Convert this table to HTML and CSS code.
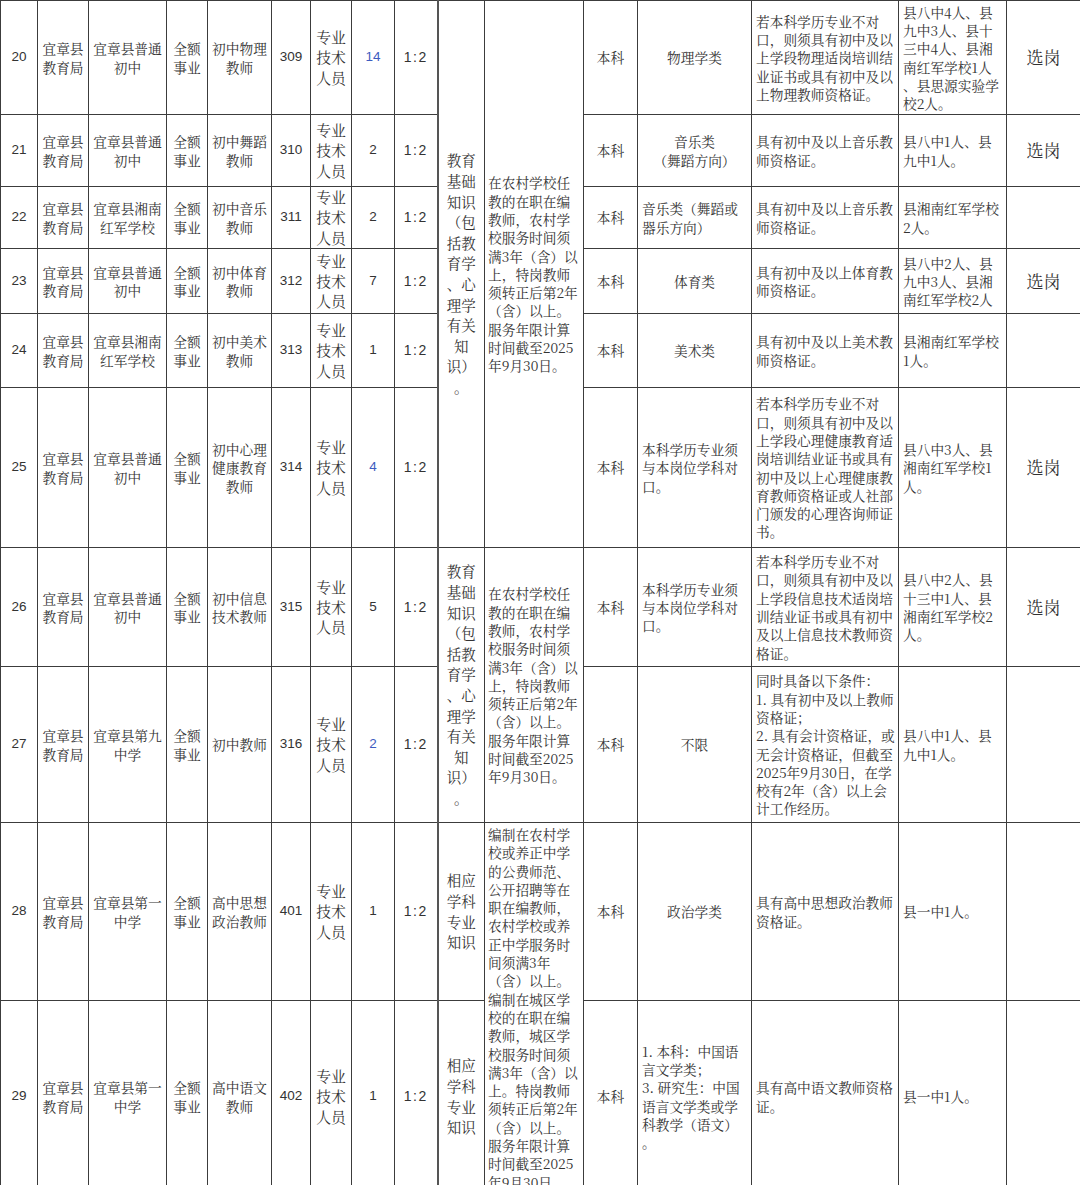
FILE: index.html
```html
<!DOCTYPE html>
<html lang="zh-CN">
<head>
<meta charset="utf-8">
<title>岗位表</title>
<link rel="stylesheet" href="styles.css">
</head>
<body>
<table class="grid">
<colgroup>
<col class="c0"><col class="c1"><col class="c2"><col class="c3"><col class="c4"><col class="c5"><col class="c6"><col class="c7"><col class="c8"><col class="c9"><col class="c10"><col class="c11"><col class="c12"><col class="c13"><col class="c14"><col class="c15">
</colgroup>
<tbody>
<tr class="r20">
<td class="num">20</td>
<td>宜章县<br>教育局</td>
<td>宜章县普通<br>初中</td>
<td>全额<br>事业</td>
<td>初中物理<br>教师</td>
<td class="num">309</td>
<td class="big">专业<br>技术<br>人员</td>
<td class="num blue">14</td>
<td class="num ratio">1:2</td>
<td class="exam" rowspan="6">教育<br>基础<br>知识<br>（包<br>括教<br>育学<br>、心<br>理学<br>有关<br>知<br>识）<br>。</td>
<td class="svc" rowspan="6">在农村学校任<br>教的在职在编<br>教师，农村学<br>校服务时间须<br>满3年（含）以<br>上，特岗教师<br>须转正后第2年<br>（含）以上。<br>服务年限计算<br>时间截至2025<br>年9月30日。</td>
<td>本科</td>
<td>物理学类</td>
<td class="l">若本科学历专业不对<br>口，则须具有初中及以<br>上学段物理适岗培训结<br>业证书或具有初中及以<br>上物理教师资格证。</td>
<td class="l">县八中4人、县<br>九中3人、县十<br>三中4人、县湘<br>南红军学校1人<br>、县思源实验学<br>校2人。</td>
<td class="pick">选岗</td>
</tr>
<tr class="r21">
<td class="num">21</td>
<td>宜章县<br>教育局</td>
<td>宜章县普通<br>初中</td>
<td>全额<br>事业</td>
<td>初中舞蹈<br>教师</td>
<td class="num">310</td>
<td class="big">专业<br>技术<br>人员</td>
<td class="num">2</td>
<td class="num ratio">1:2</td>
<td>本科</td>
<td>音乐类<br>（舞蹈方向）</td>
<td class="l">具有初中及以上音乐教<br>师资格证。</td>
<td class="l">县八中1人、县<br>九中1人。</td>
<td class="pick">选岗</td>
</tr>
<tr class="r22">
<td class="num">22</td>
<td>宜章县<br>教育局</td>
<td>宜章县湘南<br>红军学校</td>
<td>全额<br>事业</td>
<td>初中音乐<br>教师</td>
<td class="num">311</td>
<td class="big">专业<br>技术<br>人员</td>
<td class="num">2</td>
<td class="num ratio">1:2</td>
<td>本科</td>
<td class="l">音乐类（舞蹈或<br>器乐方向）</td>
<td class="l">具有初中及以上音乐教<br>师资格证。</td>
<td class="l">县湘南红军学校<br>2人。</td>
<td class="pick"></td>
</tr>
<tr class="r23">
<td class="num">23</td>
<td>宜章县<br>教育局</td>
<td>宜章县普通<br>初中</td>
<td>全额<br>事业</td>
<td>初中体育<br>教师</td>
<td class="num">312</td>
<td class="big">专业<br>技术<br>人员</td>
<td class="num">7</td>
<td class="num ratio">1:2</td>
<td>本科</td>
<td>体育类</td>
<td class="l">具有初中及以上体育教<br>师资格证。</td>
<td class="l">县八中2人、县<br>九中3人、县湘<br>南红军学校2人</td>
<td class="pick">选岗</td>
</tr>
<tr class="r24">
<td class="num">24</td>
<td>宜章县<br>教育局</td>
<td>宜章县湘南<br>红军学校</td>
<td>全额<br>事业</td>
<td>初中美术<br>教师</td>
<td class="num">313</td>
<td class="big">专业<br>技术<br>人员</td>
<td class="num">1</td>
<td class="num ratio">1:2</td>
<td>本科</td>
<td>美术类</td>
<td class="l">具有初中及以上美术教<br>师资格证。</td>
<td class="l">县湘南红军学校<br>1人。</td>
<td class="pick"></td>
</tr>
<tr class="r25">
<td class="num">25</td>
<td>宜章县<br>教育局</td>
<td>宜章县普通<br>初中</td>
<td>全额<br>事业</td>
<td>初中心理<br>健康教育<br>教师</td>
<td class="num">314</td>
<td class="big">专业<br>技术<br>人员</td>
<td class="num blue">4</td>
<td class="num ratio">1:2</td>
<td>本科</td>
<td class="l">本科学历专业须<br>与本岗位学科对<br>口。</td>
<td class="l">若本科学历专业不对<br>口，则须具有初中及以<br>上学段心理健康教育适<br>岗培训结业证书或具有<br>初中及以上心理健康教<br>育教师资格证或人社部<br>门颁发的心理咨询师证<br>书。</td>
<td class="l">县八中3人、县<br>湘南红军学校1<br>人。</td>
<td class="pick">选岗</td>
</tr>
<tr class="r26">
<td class="num">26</td>
<td>宜章县<br>教育局</td>
<td>宜章县普通<br>初中</td>
<td>全额<br>事业</td>
<td>初中信息<br>技术教师</td>
<td class="num">315</td>
<td class="big">专业<br>技术<br>人员</td>
<td class="num">5</td>
<td class="num ratio">1:2</td>
<td class="exam" rowspan="2">教育<br>基础<br>知识<br>（包<br>括教<br>育学<br>、心<br>理学<br>有关<br>知<br>识）<br>。</td>
<td class="svc" rowspan="2">在农村学校任<br>教的在职在编<br>教师，农村学<br>校服务时间须<br>满3年（含）以<br>上，特岗教师<br>须转正后第2年<br>（含）以上。<br>服务年限计算<br>时间截至2025<br>年9月30日。</td>
<td>本科</td>
<td class="l">本科学历专业须<br>与本岗位学科对<br>口。</td>
<td class="l">若本科学历专业不对<br>口，则须具有初中及以<br>上学段信息技术适岗培<br>训结业证书或具有初中<br>及以上信息技术教师资<br>格证。</td>
<td class="l">县八中2人、县<br>十三中1人、县<br>湘南红军学校2<br>人。</td>
<td class="pick">选岗</td>
</tr>
<tr class="r27">
<td class="num">27</td>
<td>宜章县<br>教育局</td>
<td>宜章县第九<br>中学</td>
<td>全额<br>事业</td>
<td>初中教师</td>
<td class="num">316</td>
<td class="big">专业<br>技术<br>人员</td>
<td class="num blue">2</td>
<td class="num ratio">1:2</td>
<td>本科</td>
<td>不限</td>
<td class="l">同时具备以下条件：<br>1. 具有初中及以上教师<br>资格证；<br>2. 具有会计资格证，或<br>无会计资格证，但截至<br>2025年9月30日，在学<br>校有2年（含）以上会<br>计工作经历。</td>
<td class="l">县八中1人、县<br>九中1人。</td>
<td class="pick"></td>
</tr>
<tr class="r28">
<td class="num">28</td>
<td>宜章县<br>教育局</td>
<td>宜章县第一<br>中学</td>
<td>全额<br>事业</td>
<td>高中思想<br>政治教师</td>
<td class="num">401</td>
<td class="big">专业<br>技术<br>人员</td>
<td class="num">1</td>
<td class="num ratio">1:2</td>
<td class="exam">相应<br>学科<br>专业<br>知识</td>
<td class="svc top" rowspan="2">编制在农村学<br>校或养正中学<br>的公费师范、<br>公开招聘等在<br>职在编教师，<br>农村学校或养<br>正中学服务时<br>间须满3年<br>（含）以上。<br>编制在城区学<br>校的在职在编<br>教师，城区学<br>校服务时间须<br>满3年（含）以<br>上。特岗教师<br>须转正后第2年<br>（含）以上。<br>服务年限计算<br>时间截至2025<br>年9月30日。</td>
<td>本科</td>
<td>政治学类</td>
<td class="l">具有高中思想政治教师<br>资格证。</td>
<td class="l">县一中1人。</td>
<td class="pick"></td>
</tr>
<tr class="r29">
<td class="num">29</td>
<td>宜章县<br>教育局</td>
<td>宜章县第一<br>中学</td>
<td>全额<br>事业</td>
<td>高中语文<br>教师</td>
<td class="num">402</td>
<td class="big">专业<br>技术<br>人员</td>
<td class="num">1</td>
<td class="num ratio">1:2</td>
<td class="exam">相应<br>学科<br>专业<br>知识</td>
<td>本科</td>
<td class="l">1. 本科：中国语<br>言文学类；<br>3. 研究生：中国<br>语言文学类或学<br>科教学（语文）<br>。</td>
<td class="l">具有高中语文教师资格<br>证。</td>
<td class="l">县一中1人。</td>
<td class="pick"></td>
</tr>
</tbody>
</table>
</body>
</html>
```
FILE: styles.css
```css
html, body {
  margin: 0;
  padding: 0;
  background: #ffffff;
}

.grid {
  border-collapse: collapse;
  table-layout: fixed;
  width: 1080px;
  font-family: "Noto Serif CJK SC", "Noto Sans CJK SC", "Noto Sans", sans-serif;
  font-size: 13.7px;
  line-height: 18.3px;
  color: #333333;
}

.c0 { width: 37px; }
.c1 { width: 51px; }
.c2 { width: 78px; }
.c3 { width: 41px; }
.c4 { width: 64px; }
.c5 { width: 39px; }
.c6 { width: 41px; }
.c7 { width: 43px; }
.c8 { width: 43px; }
.c9 { width: 47px; }
.c10 { width: 99px; }
.c11 { width: 54px; }
.c12 { width: 114px; }
.c13 { width: 147px; }
.c14 { width: 108px; }
.c15 { width: 74px; }

.grid td {
  border: 1px solid #3c3c3c;
  padding: 0 1px;
  text-align: center;
  vertical-align: middle;
  white-space: nowrap;
  overflow: hidden;
}

.r20 { height: 114px; }
.r21 { height: 72px; }
.r22 { height: 62px; }
.r23 { height: 65px; }
.r24 { height: 74px; }
.r25 { height: 160px; }
.r26 { height: 119px; }
.r27 { height: 156px; }
.r28 { height: 178px; }
.r29 { height: 192px; }

.grid td.num {
  font-family: "Liberation Sans", "Noto Sans", sans-serif;
  font-size: 13.5px;
}

.grid td.ratio {
  letter-spacing: 1.5px;
  font-size: 14px;
}

.grid td.blue {
  color: #3d5cc0;
}

.grid td.big {
  font-size: 14.8px;
  line-height: 20.3px;
}

.grid td.exam {
  font-size: 14.5px;
  line-height: 20.6px;
  border-left: 2px solid #555555;
}

.grid td.svc {
  text-align: left;
  padding-left: 3px;
}

.grid td.svc.top {
  vertical-align: top;
  padding-top: 2px;
}

.grid td.l {
  text-align: left;
  padding-left: 4px;
}

.grid td.pick {
  font-size: 17px;
}
```
